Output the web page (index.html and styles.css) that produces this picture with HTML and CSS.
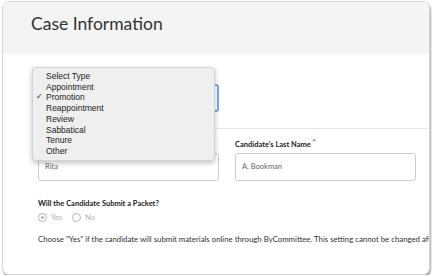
FILE: index.html
```html
<!DOCTYPE html>
<html lang="en">
<head>
    <meta charset="UTF-8">
    <meta name="viewport" content="width=device-width, initial-scale=1.0">
    <title>Case Information</title>
    <link rel="stylesheet" href="styles.css">
</head>
<body>
<div class="card">
    <div class="card-header">
        <h1>Case Information</h1>
    </div>
    <div class="card-body">
        <div class="section">
            <div class="field">
                <label class="field-label">Case Type <span class="req">*</span></label>
                <div class="select focused">Promotion</div>
            </div>
        </div>

        <div class="section divided">
            <div class="row">
                <div class="field">
                    <label class="field-label">Candidate's First Name <span class="req">*</span></label>
                    <div class="input">Rita</div>
                </div>
                <div class="field">
                    <label class="field-label">Candidate's Last Name <span class="req">*</span></label>
                    <div class="input">A. Bookman</div>
                </div>
            </div>

            <div class="question">Will the Candidate Submit a Packet?</div>
            <div class="radios">
                <span class="radio checked"></span><span class="radio-text">Yes</span>
                <span class="radio"></span><span class="radio-text">No</span>
            </div>
            <p class="help">Choose "Yes" if the candidate will submit materials online through ByCommittee. This setting cannot be changed after the case is created.</p>
        </div>
        <div class="section divided last"></div>
    </div>

    <!-- Native select menu, open -->
    <ul class="menu">
        <li>Select Type</li>
        <li>Appointment</li>
        <li class="selected">Promotion</li>
        <li>Reappointment</li>
        <li>Review</li>
        <li>Sabbatical</li>
        <li>Tenure</li>
        <li>Other</li>
    </ul>
</div>
</body>
</html>
```

FILE: styles.css
```css
body {
    margin: 0;
    background-color: #ffffff;
    font-family: Lato, "Open Sans", sans-serif;
    color: #333;
    overflow: hidden;
}

.card {
    position: relative;
    margin: 1px 2px 0 2px;
    height: 272px;
    border: 1px solid #d6d6d6;
    border-radius: 7px;
    box-shadow: 1px 2px 2px rgba(0, 0, 0, 0.35);
    overflow: hidden;
    background-color: #fff;
}

.card-header {
    height: 52px;
    box-sizing: border-box;
    background-color: #f4f4f4;
    padding: 11px 0 0 28px;
}

.card-header h1 {
    margin: 0;
    font-size: 17.5px;
    line-height: 22px;
    font-weight: 400;
    color: #333;
}

.card-body {
    padding-left: 35px;
}

.section {
    padding: 12px 0 16px 0;
}

.divided {
    border-top: 1px solid #e8e8e8;
    padding-top: 6px;
    padding-bottom: 0;
}

.last {
    margin-top: 32px;
}

.field {
    display: flex;
    flex-direction: column;
    width: 181px;
}

.field-label {
    font-size: 7.5px;
    font-weight: 700;
    line-height: 14px;
    color: #222;
    margin-bottom: 1px;
}

.req {
    color: #e0332f;
    font-size: 8px;
    vertical-align: 2px;
}

.select {
    height: 24px;
    border: 2px solid #6fa9e6;
    border-radius: 3px;
    font-size: 8px;
    line-height: 24px;
    padding-left: 6px;
    color: #333;
}

.row {
    display: flex;
    gap: 16px;
}

.input {
    height: 26px;
    border: 1px solid #c9ccd1;
    border-radius: 3px;
    font-size: 7.5px;
    line-height: 26px;
    padding-left: 6px;
    color: #666;
}

.question {
    margin-top: 16px;
    font-size: 7.5px;
    font-weight: 700;
    line-height: 13px;
    color: #222;
}

.radios {
    display: flex;
    align-items: center;
    height: 15px;
    font-size: 7.5px;
    color: #b0b0b0;
}

.radio {
    width: 7px;
    height: 7px;
    border: 1px solid #b5b5b5;
    border-radius: 50%;
    margin-right: 4px;
    position: relative;
}

.radio.checked::after {
    content: "";
    position: absolute;
    left: 2px;
    top: 2px;
    width: 3px;
    height: 3px;
    border-radius: 50%;
    background-color: #b5b5b5;
}

.radio-text {
    margin-right: 10px;
}

.help {
    margin: 7px 0 0 0;
    font-size: 7.8px;
    line-height: 14px;
    color: #333;
    white-space: nowrap;
}

/* Open dropdown menu */
.menu {
    position: absolute;
    left: 29px;
    top: 65px;
    width: 181px;
    margin: 0;
    padding: 3px 0 3px 0;
    list-style: none;
    background-color: #efefef;
    border: 1px solid #d4d4d4;
    border-radius: 4px;
    box-shadow: 0 2px 5px rgba(0, 0, 0, 0.25);
    font-family: "Liberation Sans", Arial, sans-serif;
    font-size: 8.5px;
    color: #222;
}

.menu li {
    position: relative;
    line-height: 10.7px;
    padding-left: 13px;
}

.menu li.selected::before {
    content: "\2713";
    position: absolute;
    left: 3px;
    font-size: 8px;
}
```
